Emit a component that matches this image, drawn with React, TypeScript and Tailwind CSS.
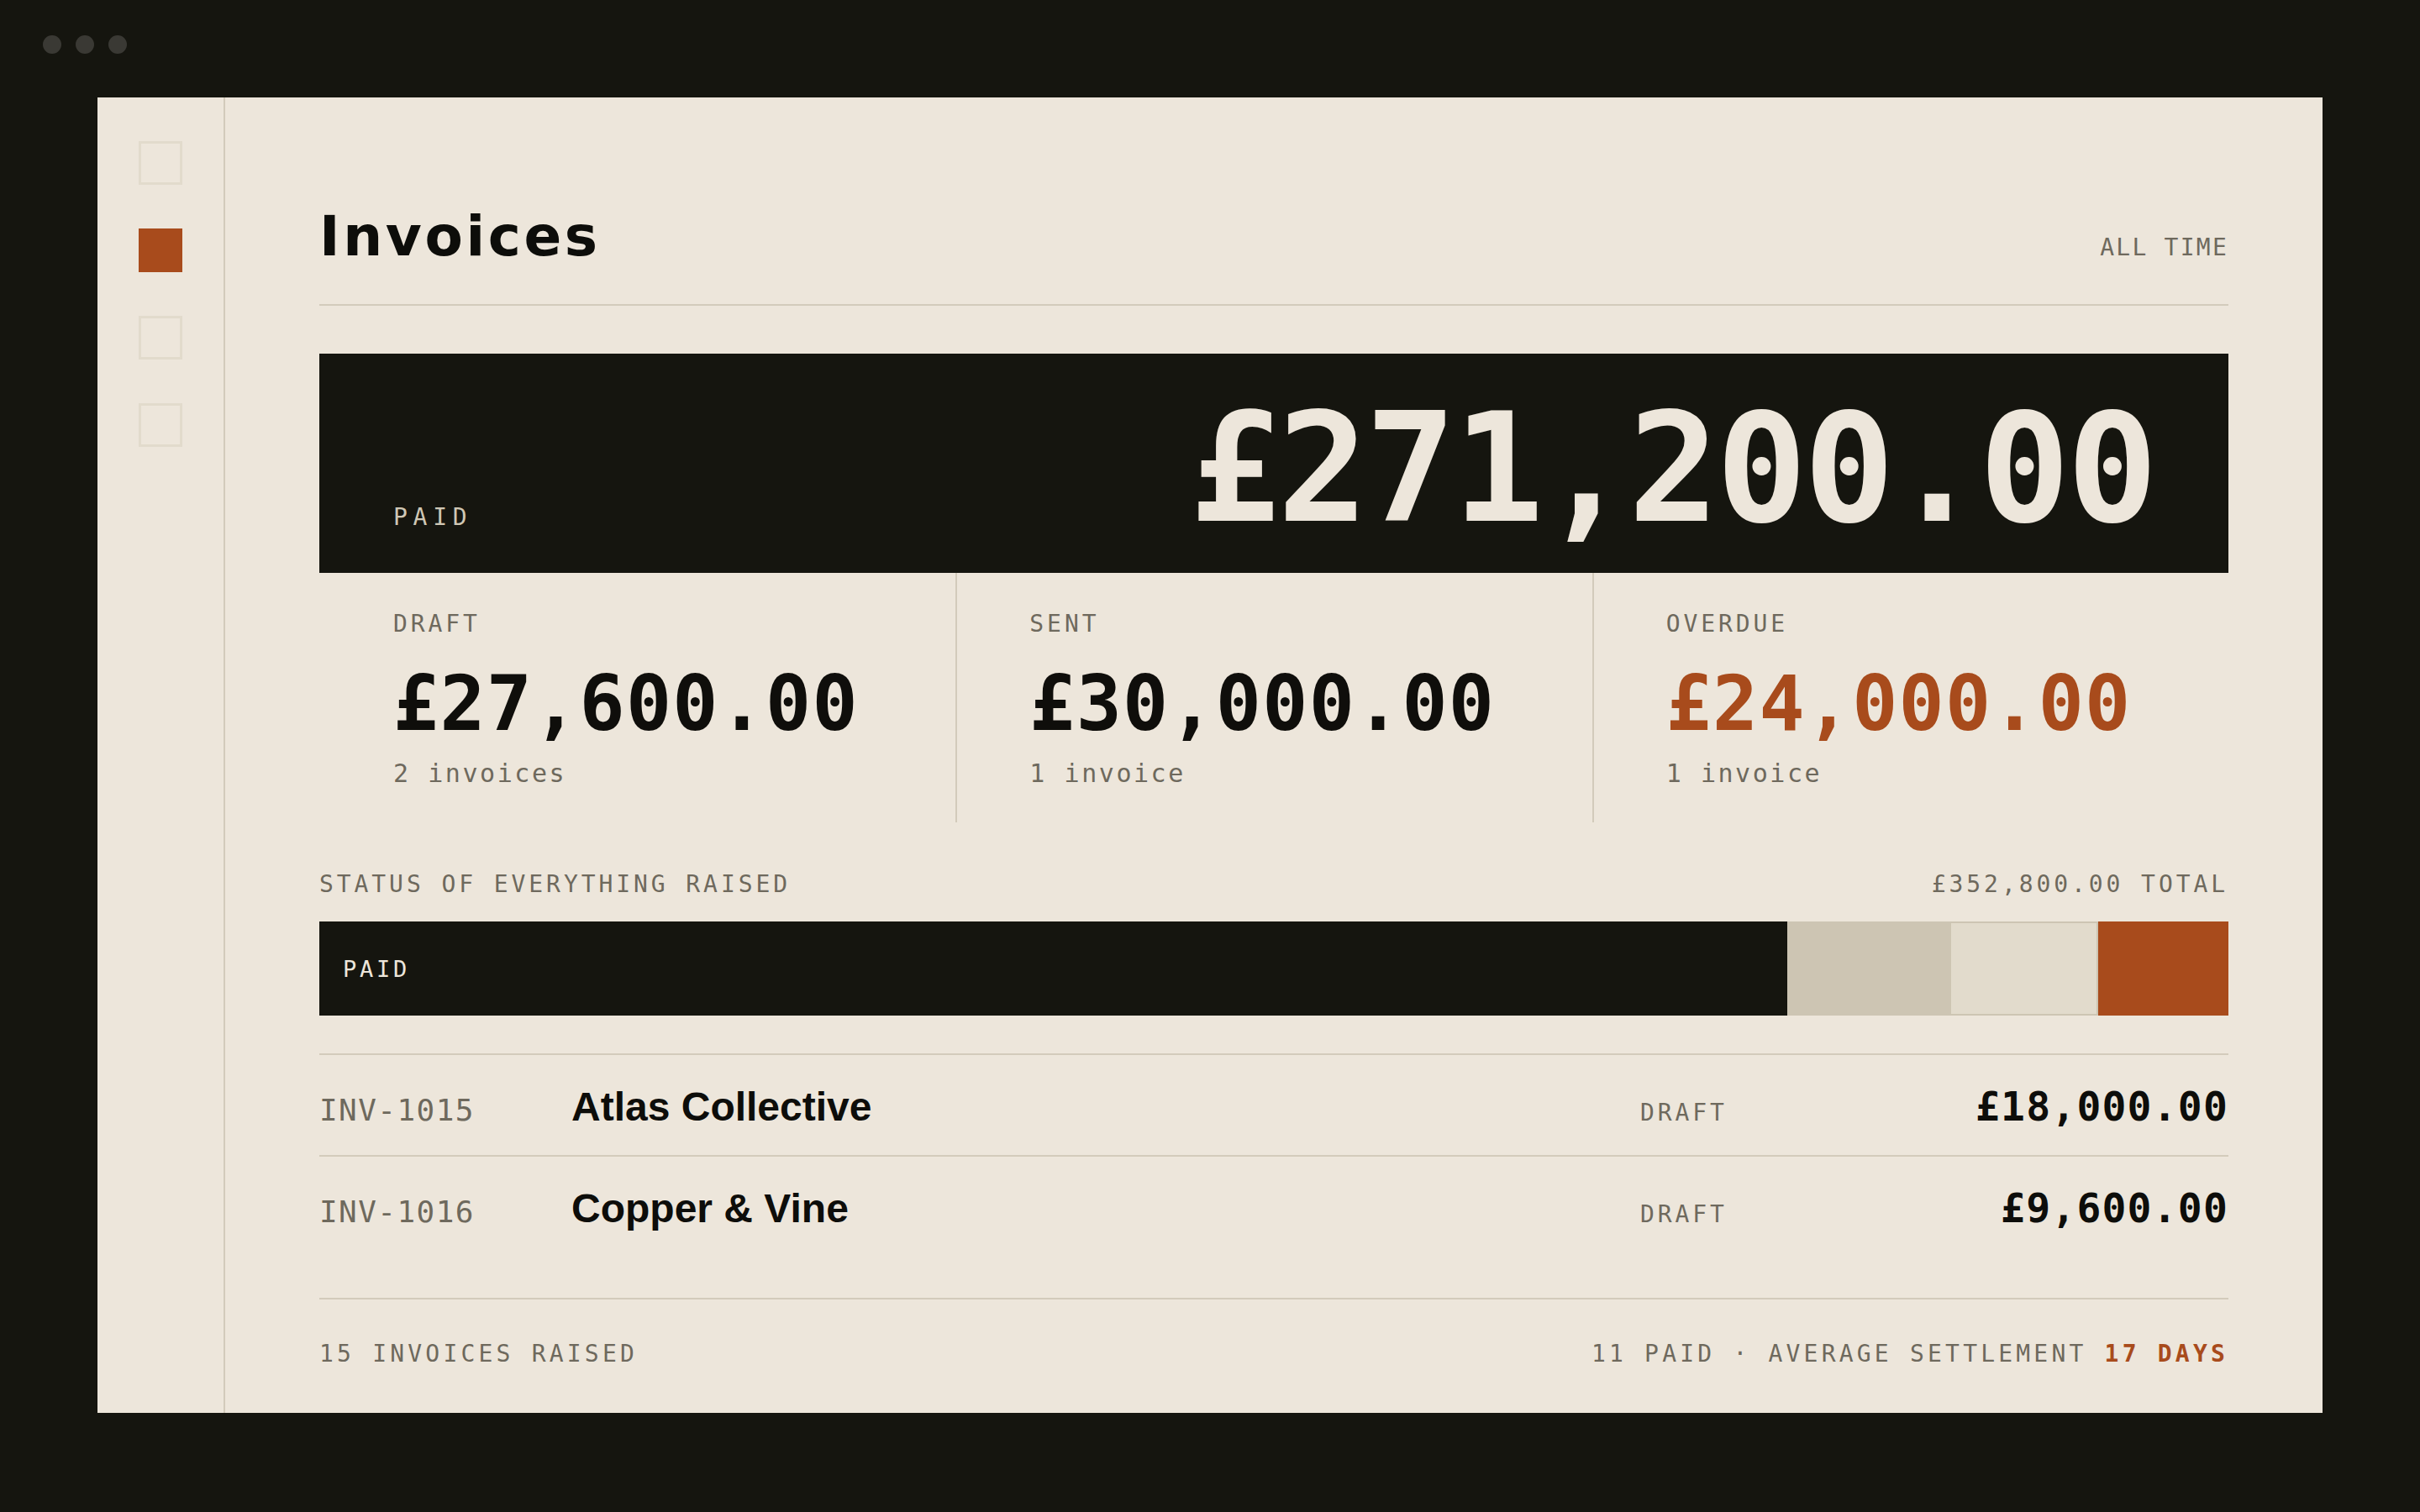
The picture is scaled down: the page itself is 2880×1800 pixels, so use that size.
import React from 'react'

/**
 * Invoices overview
 *
 * Paid / draft / sent / overdue totals with a status bar and recent drafts
 */

const mono = "font-['DejaVu_Sans_Mono','Liberation_Mono',monospace]"
const muted = 'text-[#6e695d]'

const GRAND_TOTAL = 352800

const stats = [
  { label: 'DRAFT', amount: '£27,600.00', count: '2 invoices', tone: 'text-[#0f0e0b]' },
  { label: 'SENT', amount: '£30,000.00', count: '1 invoice', tone: 'text-[#0f0e0b]' },
  { label: 'OVERDUE', amount: '£24,000.00', count: '1 invoice', tone: 'text-[#a84b1c]' },
]

const segments = [
  { key: 'paid', value: 271200, className: 'bg-[#15150f]', label: 'PAID' },
  { key: 'sent', value: 30000, className: 'bg-[#cdc5b3]' },
  { key: 'draft', value: 27600, className: 'bg-[#e2dbcc] border-2 border-[#cdc5b3]' },
  { key: 'overdue', value: 24000, className: 'bg-[#a84b1c]' },
]

const invoices = [
  { id: 'INV-1015', client: 'Atlas Collective', status: 'DRAFT', amount: '£18,000.00' },
  { id: 'INV-1016', client: 'Copper & Vine', status: 'DRAFT', amount: '£9,600.00' },
]

function Sidebar() {
  return (
    <aside className="w-[152px] shrink-0 border-r-2 border-[#d3cbbb] flex flex-col items-center pt-[52px] gap-[52px]">
      <div className="w-[52px] h-[52px] border-[3px] border-[#e2dbcc]" />
      <div className="w-[52px] h-[52px] bg-[#a84b1c]" />
      <div className="w-[52px] h-[52px] border-[3px] border-[#e2dbcc]" />
      <div className="w-[52px] h-[52px] border-[3px] border-[#e2dbcc]" />
    </aside>
  )
}

export default function App() {
  return (
    <div className="h-[1800px] w-full bg-[#15150f] flex flex-col overflow-hidden">
      {/* Window dots */}
      <div className="flex gap-[17px] pl-[51px] pt-[42px]">
        {[0, 1, 2].map((i) => (
          <span key={i} className="w-[22px] h-[22px] rounded-full bg-[#3a3934]" />
        ))}
      </div>

      <div className="mx-[116px] mt-[52px] h-[1566px] bg-[#ede6db] flex">
        <Sidebar />

        <main className="flex-1 px-[112px] flex flex-col">
          {/* Header */}
          <header className="pt-[133px] pb-[47px] border-b-2 border-[#d3cbbb] flex items-baseline justify-between">
            <h1 className="font-['DejaVu_Sans',sans-serif] font-bold text-[66px] leading-none tracking-[0.055em] text-[#0d0d0a]">
              Invoices
            </h1>
            <span className={`${mono} ${muted} text-[28px] leading-none tracking-[0.08em]`}>ALL TIME</span>
          </header>

          {/* Paid hero */}
          <div className="mt-[57px] h-[261px] bg-[#15150f] px-[88px] pb-[34px] flex items-end justify-between">
            <span className={`${mono} mb-[18px] text-[28px] leading-none tracking-[0.24em] text-[#cfc7b5]`}>PAID</span>
            <span className={`${mono} font-bold text-[180px] leading-none tracking-[-4px] text-[#ede6db]`}>
              £271,200.00
            </span>
          </div>

          {/* Stats */}
          <div className="grid grid-cols-3">
            {stats.map((s, i) => (
              <div
                key={s.label}
                className={`pt-[47px] pb-[43px] pr-[40px] ${i === 0 ? 'pl-[88px]' : 'pl-[86px] border-l-2 border-[#d3cbbb]'}`}
              >
                <div className={`${mono} ${muted} text-[28px] leading-none tracking-[0.14em]`}>{s.label}</div>
                <div className={`${mono} ${s.tone} mt-[36px] font-bold text-[90px] leading-none tracking-[1.2px]`}>{s.amount}</div>
                <div className={`${mono} ${muted} mt-[23px] text-[30px] leading-none tracking-[0.085em]`}>{s.count}</div>
              </div>
            ))}
          </div>

          {/* Status bar */}
          <div className="mt-[60px] flex items-baseline justify-between">
            <span className={`${mono} ${muted} text-[28px] leading-none tracking-[0.14em]`}>STATUS OF EVERYTHING RAISED</span>
            <span className={`${mono} ${muted} text-[28px] leading-none tracking-[0.14em]`}>£352,800.00 TOTAL</span>
          </div>
          <div className="mt-[30px] h-[112px] flex">
            {segments.map((seg) => (
              <div
                key={seg.key}
                className={`h-full flex items-center ${seg.className}`}
                style={{ width: `${(seg.value / GRAND_TOTAL) * 100}%` }}
              >
                {seg.label && (
                  <span className={`${mono} pl-[28px] text-[27px] leading-none tracking-[0.14em] text-[#ede6db]`}>
                    {seg.label}
                  </span>
                )}
              </div>
            ))}
          </div>

          {/* Invoice list */}
          <div className="mt-[45px] border-t-2 border-[#d3cbbb] divide-y-2 divide-[#d3cbbb]">
            {invoices.map((inv) => (
              <div key={inv.id} className="h-[121px] pt-[37px] flex items-baseline">
                <span className={`${mono} ${muted} w-[300px] text-[36px] leading-none tracking-[0.04em]`}>{inv.id}</span>
                <span className="flex-1 font-['Liberation_Sans',Arial,sans-serif] font-bold text-[48px] leading-none text-[#0d0d0a]">
                  {inv.client}
                </span>
                <span className={`${mono} ${muted} w-[300px] text-[28px] leading-none tracking-[0.14em]`}>{inv.status}</span>
                <span className={`${mono} w-[400px] text-right font-bold text-[48px] leading-none tracking-[1.2px] text-[#0d0d0a]`}>
                  {inv.amount}
                </span>
              </div>
            ))}
          </div>

          {/* Footer */}
          <footer className="mt-[47px] border-t-2 border-[#d3cbbb] pt-[51px] flex items-baseline justify-between">
            <span className={`${mono} ${muted} text-[28px] leading-none tracking-[0.15em]`}>15 INVOICES RAISED</span>
            <span className={`${mono} ${muted} text-[28px] leading-none tracking-[0.15em]`}>
              11 PAID · AVERAGE SETTLEMENT <span className="font-bold text-[#a84b1c]">17 DAYS</span>
            </span>
          </footer>
        </main>
      </div>
    </div>
  )
}
